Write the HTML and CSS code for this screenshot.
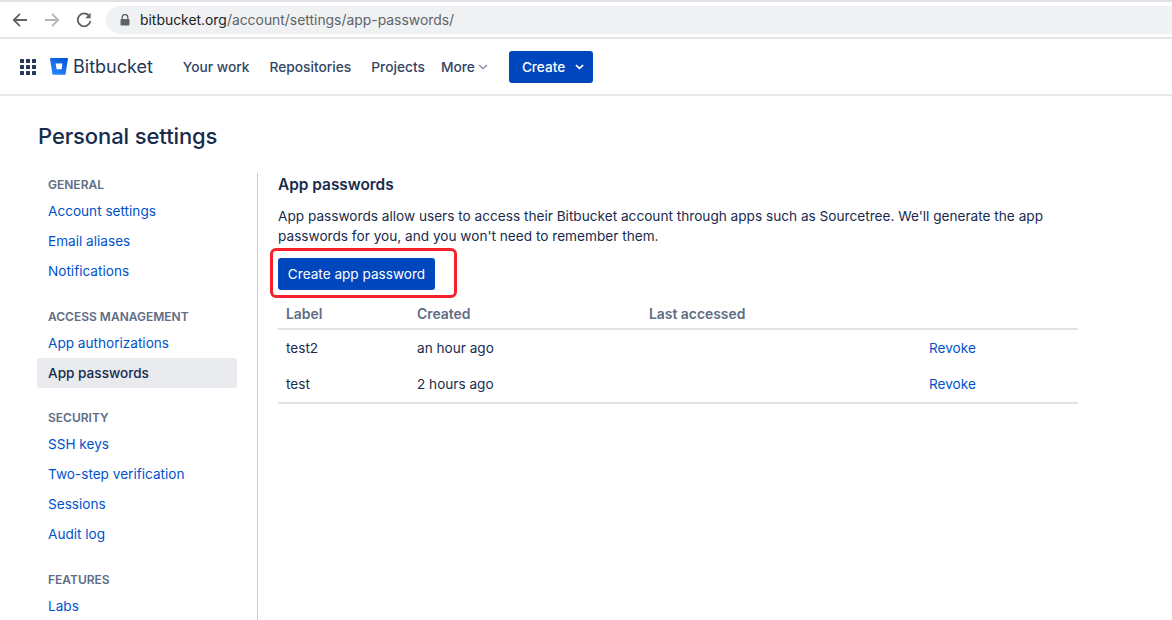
FILE: index.html
```html
<!DOCTYPE html>
<html lang="en">
<head>
<meta charset="utf-8">
<title>App passwords</title>
<link rel="stylesheet" href="styles.css">
</head>
<body>
<div class="browser">
  <svg class="tb-icon" width="18" height="18" viewBox="0 0 18 18"><path d="M16 9H3M9 2.8 2.8 9 9 15.2" fill="none" stroke="#5f6368" stroke-width="1.8"/></svg>
  <svg class="tb-icon" width="18" height="18" viewBox="0 0 18 18"><path d="M2 9h13M9 2.8 15.2 9 9 15.2" fill="none" stroke="#b4b6b9" stroke-width="1.8"/></svg>
  <svg class="tb-icon" width="18" height="18" viewBox="0 0 18 18"><path d="M14.6 5.6A6.4 6.4 0 1 0 15.4 10" fill="none" stroke="#5f6368" stroke-width="1.8"/><path d="M15.6 1.8v5.4h-5.4z" fill="#5f6368"/></svg>
  <div class="omnibox">
    <svg width="10" height="12" viewBox="0 0 10 12"><path d="M2.2 5V3.4a2.8 2.8 0 0 1 5.6 0V5" fill="none" stroke="#5f6368" stroke-width="1.3"/><rect x="0.5" y="5" width="9" height="6.5" rx="1" fill="#5f6368"/></svg>
    <span class="url"><span class="host">bitbucket.org</span>/account/settings/app-passwords/</span>
  </div>
</div>
<header class="nav">
  <svg class="apps" width="16" height="16" viewBox="0 0 16 16" fill="#253858"><rect x="0" y="0" width="4" height="4" rx=".6"/><rect x="6" y="0" width="4" height="4" rx=".6"/><rect x="12" y="0" width="4" height="4" rx=".6"/><rect x="0" y="6" width="4" height="4" rx=".6"/><rect x="6" y="6" width="4" height="4" rx=".6"/><rect x="12" y="6" width="4" height="4" rx=".6"/><rect x="0" y="12" width="4" height="4" rx=".6"/><rect x="6" y="12" width="4" height="4" rx=".6"/><rect x="12" y="12" width="4" height="4" rx=".6"/></svg>
  <div class="brand">
    <svg width="18" height="17" viewBox="0 0 18 17"><defs><linearGradient id="bb" x1="1" y1="0" x2="0.4" y2="1"><stop offset="0" stop-color="#0052cc"/><stop offset="1" stop-color="#2684ff"/></linearGradient></defs><path d="M.6 0h16.8c.4 0 .6.3.6.6l-2.4 15.5c0 .4-.3.6-.6.6H3.1c-.4 0-.7-.3-.8-.7L0 .6C0 .3.2 0 .6 0z" fill="url(#bb)"/><path d="M5.6 5.6h6.8l-.9 5.6H6.6z" fill="#fff"/></svg>
    <span>Bitbucket</span>
  </div>
  <nav class="menu">
    <a class="menu-item">Your work</a>
    <a class="menu-item">Repositories</a>
    <a class="menu-item">Projects</a>
    <a class="menu-item more">More<svg width="10" height="6" viewBox="0 0 10 6"><path d="M1 1l4 3.6L9 1" fill="none" stroke="#8993a4" stroke-width="1.5"/></svg></a>
  </nav>
  <button class="btn create">Create<svg width="9" height="6" viewBox="0 0 10 6"><path d="M1 1l4 3.6L9 1" fill="none" stroke="#fff" stroke-width="1.8"/></svg></button>
</header>
<main class="page">
  <h1 class="title">Personal settings</h1>
  <div class="columns">
    <aside class="side">
      <div class="group">
        <h4 class="side-head">GENERAL</h4>
        <a class="side-link">Account settings</a>
        <a class="side-link">Email aliases</a>
        <a class="side-link">Notifications</a>
      </div>
      <div class="group">
        <h4 class="side-head">ACCESS MANAGEMENT</h4>
        <a class="side-link">App authorizations</a>
        <a class="side-link active">App passwords</a>
      </div>
      <div class="group">
        <h4 class="side-head">SECURITY</h4>
        <a class="side-link">SSH keys</a>
        <a class="side-link">Two-step verification</a>
        <a class="side-link">Sessions</a>
        <a class="side-link">Audit log</a>
      </div>
      <div class="group">
        <h4 class="side-head">FEATURES</h4>
        <a class="side-link">Labs</a>
      </div>
    </aside>
    <section class="content">
      <h2 class="heading">App passwords</h2>
      <p class="intro">App passwords allow users to access their Bitbucket account through apps such as Sourcetree. We'll generate the app passwords for you, and you won't need to remember them.</p>
      <div class="action">
        <button class="btn primary">Create app password</button>
        <div class="highlight"></div>
      </div>
      <table class="table">
        <thead>
          <tr><th class="c1">Label</th><th class="c2">Created</th><th class="c3">Last accessed</th><th class="c4"></th></tr>
        </thead>
        <tbody>
          <tr><td>test2</td><td>an hour ago</td><td></td><td><a class="link">Revoke</a></td></tr>
          <tr><td>test</td><td>2 hours ago</td><td></td><td><a class="link">Revoke</a></td></tr>
        </tbody>
      </table>
    </section>
  </div>
</main>
</body>
</html>
```
FILE: styles.css
```css
* { box-sizing: border-box; }
html, body { margin: 0; padding: 0; height: 100%; overflow: hidden; }
body { font-family: Inter, "Liberation Sans", sans-serif; font-size: 13.6px; color: #172b4d; background: #fff; }
.browser { height: 39px; padding: 2px 0 0 11px; background: #fff; border-bottom: 2px solid #e3e4e6; display: flex; align-items: center; gap: 14px; box-shadow: inset 0 2px 0 #dee1e6; }
.tb-icon { flex: none; }
.omnibox { flex: 1; height: 28px; margin-left: -1px; background: #f0f1f3; border-radius: 14px 0 0 14px; display: flex; align-items: center; gap: 10px; padding-left: 14px; }
.url { font-size: 13.9px; color: #5f6368; }
.host { color: #202124; }
.nav { height: 57px; display: flex; align-items: center; padding-left: 20px; border-bottom: 2px solid #e7e8ea; }
.apps { flex: none; }
.brand { display: flex; align-items: center; gap: 5px; margin-left: 14px; font-size: 18px; color: #253858; }
.menu { display: flex; align-items: center; margin-left: 30px; gap: 20px; }
.menu-item { font-size: 13.75px; font-weight: 500; color: #344563; }
.more { margin-left: -4px; display: flex; align-items: center; gap: 3px; }
.btn { font-family: inherit; border: 0; border-radius: 3px; background: #0047bd; color: #fff; font-size: 13.6px; }
.create { margin-left: 21px; width: 84px; height: 32px; font-weight: 500; display: flex; align-items: center; gap: 10px; padding: 0 0 0 13px; }
.page { padding: 0 0 0 37px; }
.title { margin: 26px 0 0 1px; font-size: 22px; line-height: 28px; font-weight: 500; letter-spacing: -0.1px; color: #172b4d; }
.columns { display: flex; margin-top: 23px; }
.side { width: 221px; height: 470px; border-right: 1px solid #c9ccd1; padding: 1px 20px 0 0; flex: none; }
.group { margin-bottom: 19.6px; display: flex; flex-direction: column; }
.side-head { margin: 0; padding: 0 11px; height: 22px; line-height: 22px; font-size: 12px; font-weight: 600; color: #5e6c84; }
.side-link { height: 30px; line-height: 30px; padding: 0 11px; color: #0052cc; border-radius: 3px; }
.active { color: #172b4d; background: #e9eaed; font-weight: 500; }
.content { width: 800px; margin: 2px 0 0 20px; }
.heading { margin: 0; font-size: 15.4px; line-height: 20px; font-weight: 600; color: #172b4d; }
.intro { margin: 11px 0 0; font-size: 13.64px; line-height: 20px; color: #172b4d; }
.action { position: relative; margin-top: 12px; height: 32px; }
.primary { width: 157px; height: 32px; padding: 0; font-weight: 400; }
.highlight { position: absolute; left: -8px; top: -10px; width: 187px; height: 50px; border: 3px solid #f5222d; border-radius: 6px; }
.table { width: 800px; margin-top: 10px; border-collapse: separate; border-spacing: 0; table-layout: fixed; }
.table th { height: 30px; padding: 0 8px; text-align: left; font-weight: 600; color: #5e6c84; font-size: 13.9px; border-bottom: 2px solid #dfe1e6; }
.table td { height: 36px; padding: 0 8px; color: #172b4d; }
.table tbody tr:last-child td { height: 38px; border-bottom: 2px solid #dfe1e6; }
.c1 { width: 131px; }
.c2 { width: 232px; }
.c3 { width: 280px; }
.link { color: #0052cc; }
```
